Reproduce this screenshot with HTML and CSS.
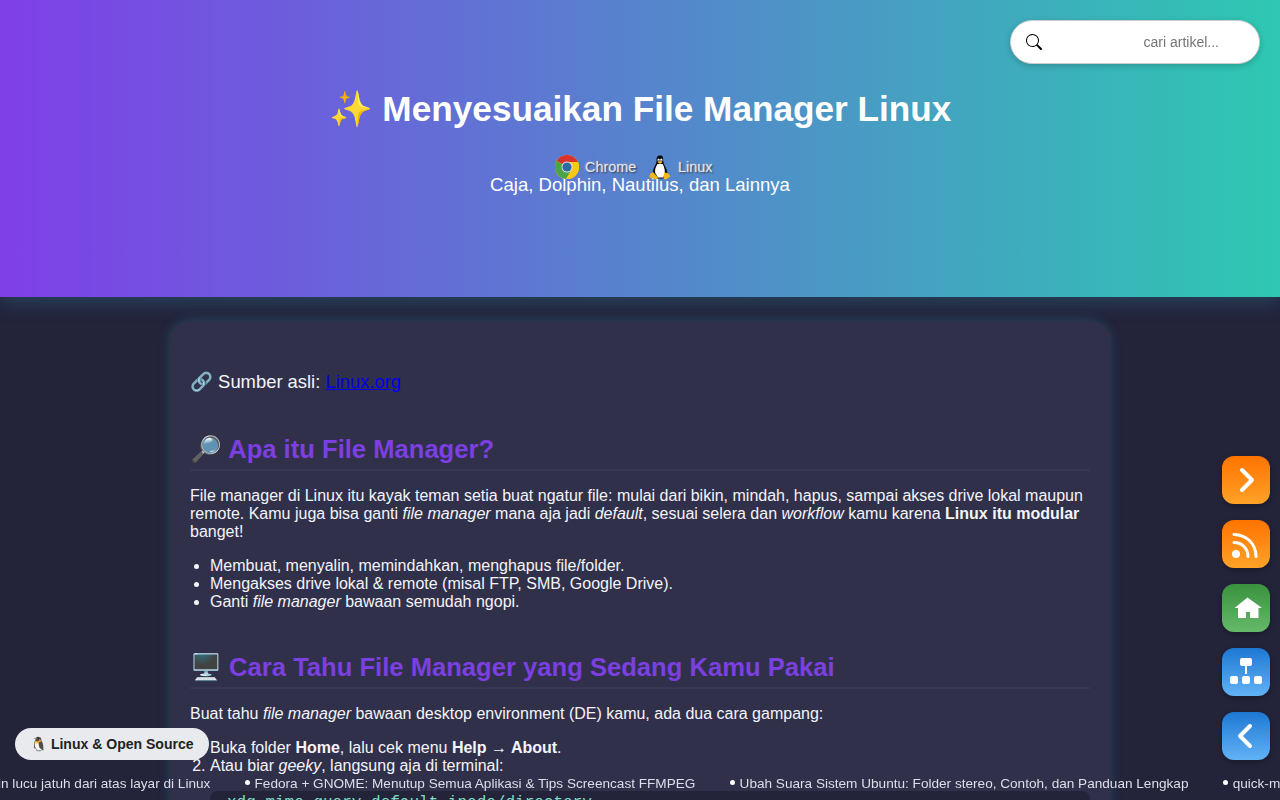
FILE: index.html
```html
<!DOCTYPE html>
<html lang="id">
<head>
<meta charset="utf-8">
<title>Menyesuaikan File Manager Linux</title>
<link rel="stylesheet" href="styles.css">
</head>
<body>
<header class="hero">
  <h1>✨ Menyesuaikan File Manager Linux</h1>
  <p class="subtitle">Caja, Dolphin, Nautilus, dan Lainnya</p>
  <div class="platform">
    <svg class="chrome" viewBox="0 0 24 24">
      <circle cx="12" cy="12" r="12" fill="#f7c915"/>
      <path d="M12 12 1.600 6A12 12 0 0 1 22.400 6L23 7H12z" fill="#d9342c"/>
      <path d="M1.600 6A12 12 0 0 0 11 24L17 14 12 12z" fill="#4ba548"/>
      <path d="M12 7H23A12 12 0 0 1 11 24L17 14.500z" fill="#f7c915"/>
      <circle cx="12" cy="12" r="5.500" fill="#dfe6e4"/>
      <circle cx="12" cy="12" r="4.600" fill="#2c6ba5"/>
    </svg>
    <span class="chrome-name">Chrome</span>
    <svg class="tux" viewBox="0 0 22 24">
      <path d="M11 0C7.800 0 7.400 2.500 7.600 5.500 7.700 8.500 4 12 3.800 17.500L7 23H15.500L18.500 18C18.300 13 14.300 9 14.200 5.500 14.200 2 14 0 11 0z" fill="#080808"/>
      <path d="M8.500 8.500C6.500 12 5.600 14 6.200 17.500L9 22H14C16.500 19 16.500 14 13.700 8.500z" fill="#fff"/>
      <ellipse cx="9.600" cy="4.500" rx="1.100" ry="1.500" fill="#fff"/><ellipse cx="12.300" cy="4.500" rx="1.200" ry="1.500" fill="#fff"/>
      <circle cx="9.900" cy="4.800" r=".5"/><circle cx="12" cy="4.800" r=".5"/>
      <path d="M8.500 6.500 11 5.500 13.500 6.700 11 8.500z" fill="#f6b719"/>
      <path d="M4 16.500 9 22Q8 24.500 5 23.500L.7 22.300Q0 21 1 18.500zM15 17 18.500 17.500 21.500 20.500Q20 22.500 16.500 24 14 24 14.500 21z" fill="#f4b619"/>
    </svg>
    <span>Linux</span>
  </div>
</header>

<label class="search">
  <svg viewBox="0 0 16 16"><path fill="#000" d="M11.742 10.344a6.500 6.500 0 1 0-1.397 1.398h-.001q.044.06.098.115l3.850 3.850a1 1 0 0 0 1.415-1.414l-3.850-3.850a1 1 0 0 0-.115-.1zM12 6.500a5.500 5.500 0 1 1-11 0 5.500 5.500 0 0 1 11 0"/></svg>
  <input type="text" placeholder="cari artikel...">
</label>

<main class="card">
  <p class="source">🔗 Sumber asli: <a href="#">Linux.org</a></p>
  <h2>🔎 Apa itu File Manager?</h2>
  <p>File manager di Linux itu kayak teman setia buat ngatur file: mulai dari bikin, mindah, hapus, sampai akses drive lokal maupun remote. Kamu juga bisa ganti <em>file manager</em> mana aja jadi <em>default</em>, sesuai selera dan <em>workflow</em> kamu karena <strong>Linux itu modular</strong> banget!</p>
  <ul>
    <li>Membuat, menyalin, memindahkan, menghapus file/folder.</li>
    <li>Mengakses drive lokal &amp; remote (misal FTP, SMB, Google Drive).</li>
    <li>Ganti <em>file manager</em> bawaan semudah ngopi.</li>
  </ul>
  <h2>🖥️ Cara Tahu File Manager yang Sedang Kamu Pakai</h2>
  <p>Buat tahu <em>file manager</em> bawaan desktop environment (DE) kamu, ada dua cara gampang:</p>
  <ol>
    <li>Buka folder <strong>Home</strong>, lalu cek menu <strong>Help → About</strong>.</li>
    <li>Atau biar <em>geeky</em>, langsung aja di terminal:
      <pre>xdg-mime query default inode/directory</pre>
    </li>
  </ol>
</main>

<nav class="side">
  <a class="orange"><svg viewBox="0 0 48 48"><path d="M20 14 30 24 20 34" class="chevron"/></svg></a>
  <a class="orange"><svg viewBox="0 0 48 48"><circle cx="14" cy="34" r="4" fill="#fff"/><path d="M12 22.500C20 22.500 26 28.500 26 36.500M12 14.500C25 15 34 24 34 36.500" class="wave"/></svg></a>
  <a class="green"><svg viewBox="0 0 48 48"><path d="M25.500 13.500 40 24H36.500V34H28V28H24V34H16V24H12.500z" fill="#fff"/></svg></a>
  <a class="blue"><svg viewBox="0 0 48 48"><g fill="#fff"><rect x="18" y="10" width="12" height="8" rx="2"/><path d="M23 17H25V26H23z"/><rect x="8" y="28" width="8" height="8" rx="2"/><rect x="20" y="28" width="8" height="8" rx="2"/><rect x="32" y="28" width="8" height="8" rx="2"/></g></svg></a>
  <a class="blue"><svg viewBox="0 0 48 48"><path d="M28 14 18 24 28 34" class="chevron"/></svg></a>
</nav>

<div class="badge">🐧 Linux &amp; Open Source</div>
<div class="ticker">
  <span>in lucu jatuh dari atas layar di Linux</span>
  <span><i></i>Fedora + GNOME: Menutup Semua Aplikasi &amp; Tips Screencast FFMPEG</span>
  <span><i></i>Ubah Suara Sistem Ubuntu: Folder stereo, Contoh, dan Panduan Lengkap</span>
  <span><i></i>quick-menu Linux</span>
</div>
</body>
</html>
```
FILE: styles.css
```css
* { box-sizing: border-box; }
html, body { height: 100%; }
body {
  margin: 0;
  overflow: hidden;
  background: #23233a;
  color: #f4f4fa;
  font: 16px "Liberation Sans", Arial, sans-serif;
}
.hero {
  position: relative;
  height: 297px;
  padding-top: 88px;
  text-align: center;
  color: #fff;
  background: linear-gradient(90deg, #7f3fe8, #2ec8b2);
  box-shadow: 0 4px 20px rgba(46, 160, 190, .3);
}
.hero h1 { margin: 0; font-size: 35.2px; line-height: 42px; }
.hero .subtitle { margin: 44px 0 0; font-size: 18.55px; line-height: 21px; }
.platform {
  position: absolute;
  left: 555px;
  top: 154px;
  display: flex;
  align-items: center;
  height: 26px;
  font-size: 14.4px;
  color: #e8e8f0;
  text-shadow: 1px 1px 2px rgba(0, 0, 0, .7), 0 0 2px rgba(255, 255, 255, .7);
}
.chrome { width: 24px; height: 24px; margin-right: 6px; }
.chrome-name { width: 64px; text-align: left; }
.tux { width: 22px; height: 25px; margin-right: 7px; }
.search {
  position: fixed;
  z-index: 3;
  top: 20px;
  right: 20px;
  display: flex;
  align-items: center;
  width: 250px;
  height: 44px;
  padding: 0 40px 0 15px;
  border: 1px solid #ccc;
  border-radius: 22px;
  background: #fff;
  box-shadow: 0 2px 6px rgba(0, 0, 0, .2);
}
.search svg { width: 16px; height: 16px; }
.search input {
  flex: 1;
  min-width: 0;
  padding: 0;
  border: 0;
  background: none;
  text-align: right;
  font: 14px "Liberation Sans", Arial, sans-serif;
}
.card {
  width: 940px;
  margin: 24px auto 0;
  padding: 50px 20px;
  border-radius: 20px;
  background: #30304a;
  box-shadow: 0 0 12px rgba(46, 160, 190, .3);
}
.card p { margin: 16px 0; line-height: 18px; }
.card .source { margin: 0; font-size: 18.4px; line-height: 21px; }
.card a { color: #00e; }
.card h2 {
  margin: 41px 0 16px;
  padding-bottom: 4px;
  border-bottom: 2px solid #373755;
  color: #7c3fe0;
  font-size: 25.6px;
  line-height: 32px;
}
.card ul + h2 { margin-top: 40px; }
.card ul, .card ol { margin: 16px 0; padding-left: 20px; line-height: 18px; }
.card pre {
  margin: 16px 0;
  padding: 3px 17px;
  border-radius: 8px;
  background: #23233a;
  color: #7fdcc8;
  font: 16px/18px "Liberation Mono", monospace;
}
.side {
  position: fixed;
  z-index: 3;
  right: 10px;
  top: 456px;
  display: grid;
  gap: 16px;
}
.side a {
  width: 48px;
  height: 48px;
  border-radius: 12px;
  box-shadow: 0 2px 6px rgba(0, 0, 0, .25);
}
.side svg { display: block; }
.orange { background: linear-gradient(#ff7300, #ffa227); }
.green { background: linear-gradient(#3a913e, #65ba69); }
.blue { background: linear-gradient(#1e78d3, #62b3f5); }
.chevron, .wave { fill: none; stroke: #fff; stroke-linecap: round; stroke-linejoin: round; }
.chevron { stroke-width: 4; }
.wave { stroke-width: 3; }
.badge {
  position: fixed;
  z-index: 2;
  left: 15px;
  top: 728px;
  width: 194px;
  height: 32px;
  padding: 0 15px;
  border-radius: 16px;
  background: #e9eaed;
  color: #222;
  font-size: 14.04px;
  font-weight: bold;
  line-height: 32px;
  white-space: nowrap;
}
.ticker {
  position: fixed;
  z-index: 2;
  left: -2px;
  top: 775px;
  display: flex;
  gap: 34.7px;
  white-space: nowrap;
  color: #dedee8;
  font-size: 13.6px;
  line-height: 17px;
}
.ticker i {
  display: inline-block;
  width: 5px;
  height: 5px;
  margin-right: 4.5px;
  border-radius: 50%;
  background: #fff;
  vertical-align: 3px;
}
```
